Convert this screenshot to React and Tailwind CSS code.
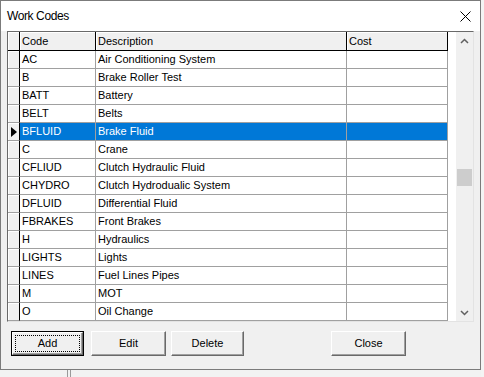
import React from "react";

const rows = [
  ["AC", "Air Conditioning System"],
  ["B", "Brake Roller Test"],
  ["BATT", "Battery"],
  ["BELT", "Belts"],
  ["BFLUID", "Brake Fluid"],
  ["C", "Crane"],
  ["CFLIUD", "Clutch Hydraulic Fluid"],
  ["CHYDRO", "Clutch Hydrodualic System"],
  ["DFLUID", "Differential Fluid"],
  ["FBRAKES", "Front Brakes"],
  ["H", "Hydraulics"],
  ["LIGHTS", "Lights"],
  ["LINES", "Fuel Lines Pipes"],
  ["M", "MOT"],
  ["O", "Oil Change"],
];

const SEL = 4;

function Btn({ label, w, ml, def }) {
  if (def) {
    return (
      <div className={`${w} ${ml} h-[25px] border border-black flex`}>
        <div className="flex-1 flex border-t border-l border-t-white border-l-white border-b border-r border-b-[#696969] border-r-[#696969] shadow-[inset_-1px_-1px_0_#a0a0a0] bg-[#f0f0f0] p-[2px]">
          <div className="flex-1 flex items-center justify-center border border-dotted border-black text-[11px] text-black">
            {label}
          </div>
        </div>
      </div>
    );
  }
  return (
    <div
      className={`${w} ${ml} h-[25px] flex items-center justify-center border-t border-l border-t-white border-l-white border-b border-r border-b-[#696969] border-r-[#696969] shadow-[inset_-1px_-1px_0_#a0a0a0] bg-[#f0f0f0] text-[11px] text-black`}
    >
      {label}
    </div>
  );
}

export default function App() {
  return (
    <div
      className="w-[484px] h-[377px] overflow-hidden bg-[#efefef] flex"
      style={{ fontFamily: '"Liberation Sans", Arial, sans-serif' }}
    >
      <div className="flex flex-col w-[481px]">
        <div className="w-[481px] h-[370px] border border-[#7b7b7b] bg-[#f0f0f0] flex flex-col">
          {/* Title bar */}
          <div className="h-[30px] bg-white flex items-center justify-between pl-[6px] pr-[9px]">
            <span className="text-[12px] tracking-[-0.4px] text-black">Work Codes</span>
            <svg width="11" height="11" viewBox="0 0 11 11">
              <path d="M0.5 0.5 L10.5 10.5 M10.5 0.5 L0.5 10.5" stroke="#000" strokeWidth="1" />
            </svg>
          </div>

          {/* Grid */}
          <div className="ml-[6px] w-[467px] h-[291px] border-t border-l border-t-[#696969] border-l-[#696969] border-b border-r border-b-[#e3e3e3] border-r-[#e3e3e3] flex bg-white">
            <div className="w-[448px] flex flex-col text-[11px] text-black">
              {/* header */}
              <div className="h-[19px] flex">
                <div className="w-[12px] bg-[#f0f0f0] border-r border-b border-black shadow-[inset_1px_1px_0_#fff]" />
                <div className="w-[76px] bg-[#f0f0f0] border-r border-b border-black shadow-[inset_1px_1px_0_#fff] pl-[2px] flex items-center">Code</div>
                <div className="w-[251px] bg-[#f0f0f0] border-r border-b border-black shadow-[inset_1px_1px_0_#fff] pl-[2px] flex items-center">Description</div>
                <div className="w-[101px] bg-[#f0f0f0] border-r border-b border-black shadow-[inset_1px_1px_0_#fff] pl-[2px] flex items-center">Cost</div>
              </div>
              {rows.map(([c, d], i) => {
                const sel = i === SEL;
                const cell = sel
                  ? "bg-[#0078d7] text-white border-r border-b border-r-[#a0a0a0] border-b-[#a0a0a0]"
                  : "bg-white border-r border-b border-[#a0a0a0]";
                return (
                  <div key={c} className="h-[18px] flex">
                    <div className="w-[12px] bg-[#f0f0f0] border-r border-r-black border-b border-b-[#a0a0a0] shadow-[inset_1px_1px_0_#fff] flex items-center justify-center">
                      {sel && (
                        <svg width="6" height="10" viewBox="0 0 6 10">
                          <path d="M0 0 L6 5 L0 10 Z" fill="#000" />
                        </svg>
                      )}
                    </div>
                    <div className={`w-[76px] ${cell} pl-[2px] flex items-center whitespace-nowrap`}>{c}</div>
                    <div className={`w-[251px] ${cell} pl-[2px] flex items-center whitespace-nowrap`}>{d}</div>
                    <div className={`w-[101px] ${cell}`} />
                  </div>
                );
              })}
            </div>
            {/* scrollbar */}
            <div className="w-[17px] bg-[#f0f0f0] flex flex-col">
              <div className="h-[17px] flex items-center justify-center">
                <svg width="9" height="6" viewBox="0 0 9 6">
                  <path d="M1 5 L4.5 1.5 L8 5" stroke="#606060" strokeWidth="1.5" fill="none" />
                </svg>
              </div>
              <div className="flex-1 flex flex-col px-[1px]">
                <div className="h-[120px]" />
                <div className="h-[17px] bg-[#cdcdcd]" />
              </div>
              <div className="h-[17px] flex items-center justify-center">
                <svg width="9" height="6" viewBox="0 0 9 6">
                  <path d="M1 1 L4.5 4.5 L8 1" stroke="#606060" strokeWidth="1.5" fill="none" />
                </svg>
              </div>
            </div>
          </div>

          {/* Buttons */}
          <div className="mt-[9px] flex">
            <Btn label="Add" w="w-[73px]" ml="ml-[10px]" def />
            <Btn label="Edit" w="w-[75px]" ml="ml-[7px]" />
            <Btn label="Delete" w="w-[73px]" ml="ml-[5px]" />
            <Btn label="Close" w="w-[75px]" ml="ml-[87px]" />
          </div>
        </div>
        <div className="flex-1 flex bg-[#f2f2f2]">
          <div className="ml-[67px] w-[1px] bg-[#9a9a9a]" />
          <div className="ml-[2px] w-[1px] bg-[#9a9a9a]" />
        </div>
      </div>
      <div className="flex-1 bg-[#f4f4f4]" />
    </div>
  );
}
